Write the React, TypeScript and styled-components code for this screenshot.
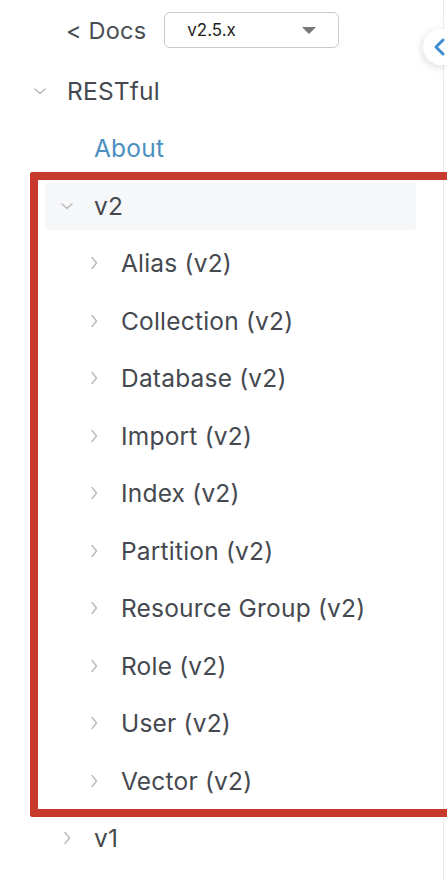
import styled, { createGlobalStyle } from "styled-components";

const GlobalStyle = createGlobalStyle`
  body {
    margin: 0;
    background: #fff;
    overflow-x: hidden;
    font-family: Inter, "Noto Sans", sans-serif;
  }
`;

const Sidebar = styled.nav`
  position: relative;
  width: 443px;
  min-height: 880px;
  border-right: 1px solid #ebebeb;
`;

const Header = styled.div`
  display: flex;
  align-items: center;
  gap: 18px;
  height: 62px;
  padding-left: 66px;
  padding-bottom: 2px;
  box-sizing: border-box;
`;

const BackLink = styled.a`
  font-size: 23.5px;
  letter-spacing: 0.2px;
  color: #4a4d52;
  text-decoration: none;
`;

const Select = styled.div`
  display: flex;
  align-items: center;
  justify-content: space-between;
  width: 175px;
  height: 36px;
  box-sizing: border-box;
  padding: 0 22px;
  border: 1px solid #c9c9c9;
  border-radius: 6px;
  font-size: 17px;
  color: #1e1e1e;
`;

const Caret = styled.span`
  width: 0;
  height: 0;
  border-left: 7px solid transparent;
  border-right: 7px solid transparent;
  border-top: 7px solid #777;
`;

// the round toggle is cut by the right edge of the frame
const CollapseButton = styled.button`
  position: absolute;
  left: 423px;
  top: 29px;
  width: 24px;
  height: 36px;
  border: none;
  border-radius: 18px 0 0 18px;
  background: #fff;
  box-shadow: -1px 2px 8px rgba(0, 0, 0, 0.14);
  padding: 0 0 0 10px;
  display: flex;
  align-items: center;
`;

const Tree = styled.ul`
  list-style: none;
  margin: 0;
  padding: 0;
`;

const Row = styled.li`
  height: 57.5px;
  padding: 5px 27px 5px 0;
  box-sizing: border-box;
  display: flex;
`;

const RowInner = styled.div<{ $level: number; $active?: boolean }>`
  flex: 1;
  display: flex;
  align-items: center;
  margin-left: ${(p) => 18 + p.$level * 27}px;
  border-radius: 4px;
  background: ${(p) => (p.$active ? "#f6f7f9" : "transparent")};
`;

const IconBox = styled.span`
  width: 20px;
  height: 20px;
  margin-left: 12px;
  margin-right: 17px;
  display: flex;
  align-items: center;
  justify-content: center;
  flex-shrink: 0;
`;

const Label = styled.span<{ $link?: boolean }>`
  font-size: 24.5px;
  letter-spacing: 0.2px;
  color: ${(p) => (p.$link ? "#4a8fc0" : "#45494f")};
  white-space: nowrap;
`;

const Annotation = styled.div`
  position: absolute;
  left: 30px;
  top: 172px;
  width: 417px;
  height: 645px;
  box-sizing: border-box;
  border: 8px solid #c73a2b;
  border-right: none;
  border-radius: 3px 0 0 3px;
  pointer-events: none;
`;

type Node = {
  label: string;
  level: number;
  state: "open" | "closed" | "leaf";
  link?: boolean;
  active?: boolean;
};

const items: Node[] = [
  { label: "RESTful", level: 0, state: "open" },
  { label: "About", level: 1, state: "leaf", link: true },
  { label: "v2", level: 1, state: "open", active: true },
  ...[
    "Alias (v2)",
    "Collection (v2)",
    "Database (v2)",
    "Import (v2)",
    "Index (v2)",
    "Partition (v2)",
    "Resource Group (v2)",
    "Role (v2)",
    "User (v2)",
    "Vector (v2)",
  ].map((label) => ({ label, level: 2, state: "closed" as const })),
  { label: "v1", level: 1, state: "closed" },
];

const Chevron = ({ open }: { open: boolean }) => (
  <svg width="14" height="14" viewBox="0 0 14 14" fill="none">
    <path
      d={open ? "M2 5l5 4.5L12 5" : "M5 1.5l4.5 5.5L5 12.5"}
      stroke="#bdbdbd"
      strokeWidth="1.6"
      strokeLinecap="round"
      strokeLinejoin="round"
    />
  </svg>
);

const App = () => {
  return (
    <>
      <GlobalStyle />
      <Sidebar>
        <Header>
          <BackLink href="#">&lt; Docs</BackLink>
          <Select>
            <span>v2.5.x</span>
            <Caret />
          </Select>
        </Header>
        <Tree>
          {items.map((item) => (
            <Row key={item.label}>
              <RowInner $level={item.level} $active={item.active}>
                <IconBox>
                  {item.state !== "leaf" && (
                    <Chevron open={item.state === "open"} />
                  )}
                </IconBox>
                <Label $link={item.link}>{item.label}</Label>
              </RowInner>
            </Row>
          ))}
        </Tree>
      </Sidebar>
      <Annotation />
      <CollapseButton aria-label="collapse">
        <svg width="12" height="18" viewBox="0 0 12 18" fill="none">
          <path
            d="M10 2L3 9l7 7"
            stroke="#3d8bd1"
            strokeWidth="3"
            strokeLinecap="round"
            strokeLinejoin="round"
          />
        </svg>
      </CollapseButton>
    </>
  );
};

export default App;
